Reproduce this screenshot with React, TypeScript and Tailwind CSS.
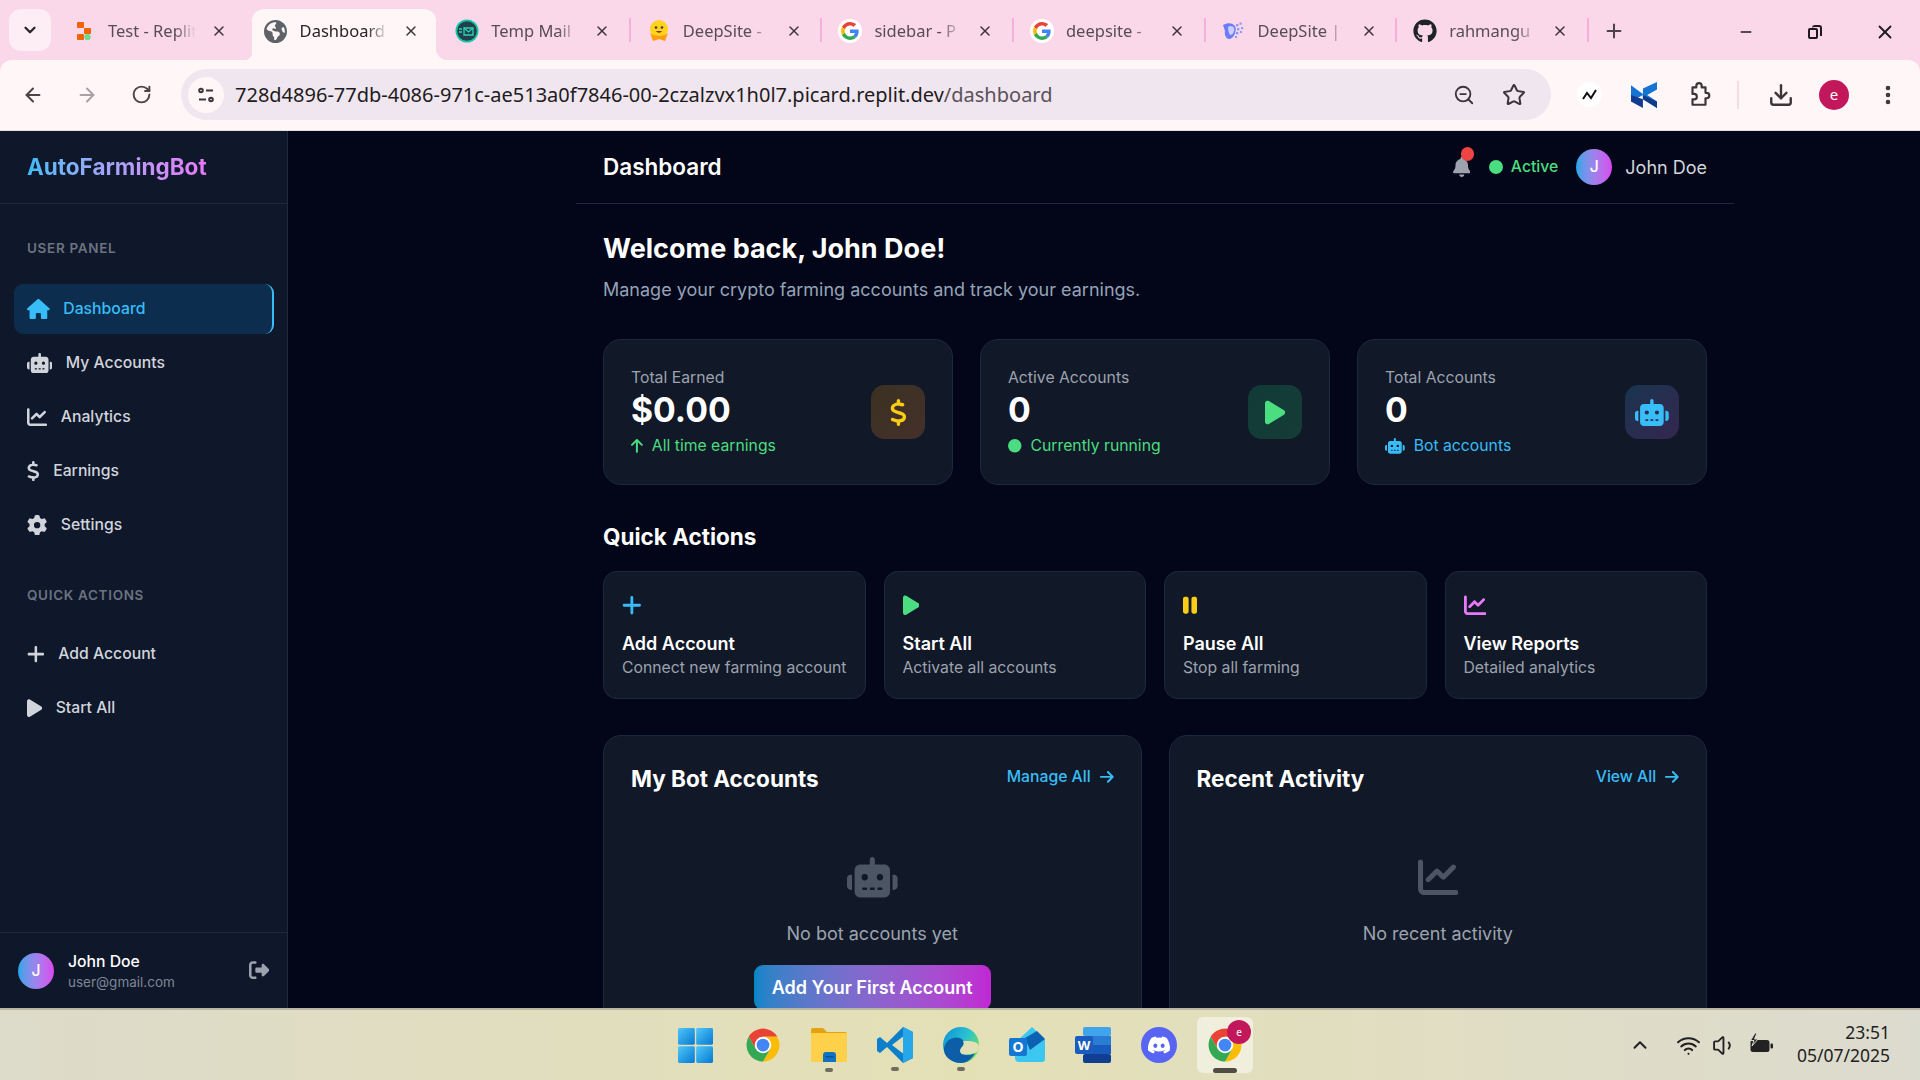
import type { ReactNode } from "react";
import {
  ArrowLeft,
  ArrowRight,
  ChevronDown,
  ChevronUp,
  Download,
  Minus,
  MoreVertical,
  Plus,
  RotateCw,
  Star,
  Volume1,
  Wifi,
  X,
  ZoomOut,
} from "lucide-react";
import { FaDiscord, FaGithub } from "react-icons/fa";
import {
  FaArrowRight,
  FaArrowUp,
  FaBell,
  FaChartLine,
  FaCircle,
  FaDollarSign,
  FaEarthAmericas,
  FaGear,
  FaHouse,
  FaPause,
  FaPlay,
  FaPlus,
  FaRightFromBracket,
  FaRobot,
} from "react-icons/fa6";

function GoogleIcon() {
  return (
    <span className="flex h-6 w-6 items-center justify-center rounded-full bg-white">
      <svg viewBox="0 0 48 48" className="h-[18px] w-[18px]">
        <path fill="#EA4335" d="M24 9.5c3.54 0 6.71 1.22 9.21 3.6l6.85-6.85C35.9 2.38 30.47 0 24 0 14.62 0 6.51 5.38 2.56 13.22l7.98 6.19C12.43 13.72 17.74 9.5 24 9.5z" />
        <path fill="#4285F4" d="M46.98 24.55c0-1.57-.15-3.09-.38-4.55H24v9.02h12.94c-.58 2.96-2.26 5.48-4.78 7.18l7.73 6c4.51-4.18 7.09-10.36 7.09-17.65z" />
        <path fill="#FBBC05" d="M10.53 28.59c-.48-1.45-.76-2.99-.76-4.59s.27-3.14.76-4.59l-7.98-6.19C.92 16.46 0 20.12 0 24c0 3.88.92 7.54 2.56 10.78l7.97-6.19z" />
        <path fill="#34A853" d="M24 48c6.48 0 11.93-2.13 15.89-5.81l-7.73-6c-2.15 1.45-4.92 2.3-8.16 2.3-6.26 0-11.57-4.22-13.47-9.91l-7.98 6.19C6.51 42.62 14.62 48 24 48z" />
      </svg>
    </span>
  );
}

function ReplitIcon() {
  return (
    <svg viewBox="0 0 24 24" className="h-6 w-6">
      <rect x="5" y="3" width="7" height="6" rx="1" fill="#f26207" />
      <rect x="12" y="9" width="7" height="6" rx="1" fill="#f26207" />
      <rect x="5" y="15" width="7" height="6" rx="1" fill="#f26207" />
      <circle cx="15.5" cy="18" r="3.2" fill="#6fdc8c" />
    </svg>
  );
}

function TempMailIcon() {
  return (
    <svg viewBox="0 0 24 24" className="h-6 w-6">
      <circle cx="12" cy="12" r="11.5" fill="#17c5a6" />
      <circle cx="12" cy="12" r="9.8" fill="#21404a" />
      <path d="M9 9h9v7H9z" fill="none" stroke="#2dd4b4" strokeWidth="1.3" />
      <path d="M9 9l4.5 4L18 9M4 10h3M4 13h3" fill="none" stroke="#2dd4b4" strokeWidth="1.3" />
    </svg>
  );
}

function HuggingIcon() {
  return (
    <svg viewBox="0 0 24 24" className="h-[26px] w-[26px]">
      <circle cx="12" cy="10" r="9" fill="#ffd21e" />
      <circle cx="9" cy="8.5" r="1.3" fill="#3a3b45" />
      <circle cx="15" cy="8.5" r="1.3" fill="#3a3b45" />
      <path d="M9 12c1.5 2.4 4.5 2.4 6 0z" fill="#7a3b2a" />
      <path d="M3 14l3 8 6-2 6 2 3-8-3 2-6 1-6-1z" fill="#ff9d0b" />
    </svg>
  );
}

function DeepSiteIcon() {
  return (
    <svg viewBox="0 0 24 24" className="h-[26px] w-[26px]">
      <path d="M1 6c5-3 10-2 12 1 2 4 0 11-5 13C4 21 2 15 3 12z" fill="#6d7cf6" />
      <path d="M6 8c3-2 5-1 6 1 1 3-1 6-3 7-2 0-3-5-3-8z" fill="#c9d0ff" />
      <g fill="#8f9bf8">
        <rect x="14" y="5" width="2.4" height="2.4" />
        <rect x="17.5" y="3.5" width="2.2" height="2.2" />
        <rect x="15" y="9" width="2.4" height="2.4" />
        <rect x="19" y="8" width="2.2" height="2.2" />
        <rect x="14" y="13" width="2.4" height="2.4" />
        <rect x="18" y="12" width="2" height="2" />
        <rect x="13" y="17" width="2" height="2" />
      </g>
    </svg>
  );
}

function ChromeLogo({ className }: { className: string }) {
  return (
    <svg viewBox="0 0 48 48" className={className}>
      <path fill="#ea4335" d="M5 13A22 22 0 0 1 43 13L24 13 14.5 29.5Z" />
      <path fill="#fbbc04" d="M43 13A22 22 0 0 1 24 46L33.5 29.5 24 13Z" />
      <path fill="#34a853" d="M24 46A22 22 0 0 1 5 13L14.5 29.5H33.5Z" />
      <circle cx="24" cy="24" r="11" fill="#fff" />
      <circle cx="24" cy="24" r="8.5" fill="#4285f4" />
    </svg>
  );
}

function WindowsLogo() {
  return (
    <svg viewBox="0 0 36 36" className="h-[35px] w-[35px]">
      <defs>
        <linearGradient id="win" x1="0" y1="0" x2="1" y2="1">
          <stop offset="0" stopColor="#4fc8f7" />
          <stop offset="1" stopColor="#0678d4" />
        </linearGradient>
      </defs>
      <rect x="0" y="0" width="17.3" height="17.3" rx="1.5" fill="url(#win)" />
      <rect x="18.7" y="0" width="17.3" height="17.3" rx="1.5" fill="url(#win)" />
      <rect x="0" y="18.7" width="17.3" height="17.3" rx="1.5" fill="url(#win)" />
      <rect x="18.7" y="18.7" width="17.3" height="17.3" rx="1.5" fill="url(#win)" />
    </svg>
  );
}

function FilesLogo() {
  return (
    <svg viewBox="0 0 36 34" className="h-[34px] w-9">
      <path d="M0 2a2 2 0 0 1 2-2h10l4 4h18a2 2 0 0 1 2 2v6H0z" fill="#e2a30f" />
      <rect x="0" y="5" width="36" height="29" rx="1" fill="#ffd04a" />
      <path d="M12 34V27a3 3 0 0 1 3-3h7a3 3 0 0 1 3 3v7z" fill="#0f72c4" />
      <rect x="14.5" y="28" width="8" height="1.4" fill="#0a4f8f" />
    </svg>
  );
}

function VsCodeLogo() {
  return (
    <svg viewBox="0 0 36 36" className="h-9 w-9">
      <path d="M26 0l10 5v26l-10 5L10 20 3 26l-3-2V12l3-2 7 6z" fill="#0b7fc9" />
      <path d="M26 0l10 5v26l-10 5z" fill="#25a7ea" />
      <path d="M26 9.5L15 18l11 8.500z" fill="#e3dfb9" />
    </svg>
  );
}

function EdgeLogo() {
  return (
    <svg viewBox="0 0 36 36" className="h-9 w-9">
      <defs>
        <linearGradient id="edgeTop" x1="0" y1="0" x2="1" y2="0.6">
          <stop offset="0" stopColor="#0c8fd8" />
          <stop offset="0.6" stopColor="#2bc3cf" />
          <stop offset="1" stopColor="#70dd5f" />
        </linearGradient>
      </defs>
      <circle cx="18" cy="18" r="18" fill="url(#edgeTop)" />
      <path d="M1 21C3 12 11 9 17 11c5 2 5 7 2 9-2 2-3 5 0 7 4 2 10 1 13-1-3 6-8 10-14 10C8 36 0 29 1 21z" fill="#0d5ea8" />
      <path d="M36 20c0 3-1 5-4 6-3 1-9 2-13 1-3-2-2-5 0-7 2-2 2-4 1-6 7 0 16 0 16 6z" fill="#e3dfb6" />
    </svg>
  );
}

function OutlookLogo() {
  return (
    <svg viewBox="0 0 36 36" className="h-9 w-9">
      <path d="M6 16L23 0l13 12v20a3 3 0 0 1-3 3H10a4 4 0 0 1-4-4z" fill="#3cc7f0" />
      <path d="M16 11L28 4l8 8-15 11z" fill="#0c61b3" />
      <rect x="0" y="11" width="18" height="18" rx="2" fill="#1478d2" />
      <text x="9" y="25" textAnchor="middle" fontSize="14" fontWeight="700" fill="#fff" fontFamily="Noto Sans, sans-serif">
        O
      </text>
    </svg>
  );
}

function WordLogo() {
  return (
    <svg viewBox="0 0 36 36" className="h-9 w-9">
      <rect x="8" y="0" width="28" height="9" rx="2" fill="#41a5ee" />
      <rect x="8" y="9" width="28" height="9" fill="#2b7cd3" />
      <rect x="8" y="18" width="28" height="9" fill="#185abd" />
      <rect x="8" y="27" width="28" height="9" rx="2" fill="#103f91" />
      <rect x="0" y="9" width="18" height="18" rx="2" fill="#1a5cbf" />
      <text x="9" y="23" textAnchor="middle" fontSize="13" fontWeight="700" fill="#fff" fontFamily="Noto Sans, sans-serif">
        W
      </text>
    </svg>
  );
}

function Avatar() {
  return (
    <div className="flex h-9 w-9 shrink-0 items-center justify-center rounded-full bg-linear-to-r from-[#0ea5e9] to-[#d946ef] text-[15.75px] font-medium text-white">
      J
    </div>
  );
}

const tabs: { title: string; icon: ReactNode; sep?: boolean; active?: boolean }[] = [
  { title: "Test - Replit", icon: <ReplitIcon /> },
  { title: "Dashboard", icon: <FaEarthAmericas className="h-[23px] w-[23px] text-[#5f6368]" />, active: true },
  { title: "Temp Mail", icon: <TempMailIcon />, sep: true },
  { title: "DeepSite - ", icon: <HuggingIcon />, sep: true },
  { title: "sidebar - P", icon: <GoogleIcon />, sep: true },
  { title: "deepsite - ", icon: <GoogleIcon />, sep: true },
  { title: "DeepSite | ", icon: <DeepSiteIcon />, sep: true },
  { title: "rahmangu", icon: <FaGithub className="h-6 w-6 text-[#1f2328]" />, sep: true },
];

function BrowserTab({ title, icon, sep, active }: { title: string; icon: ReactNode; sep?: boolean; active?: boolean }) {
  return (
    <div className="relative flex h-[51px] w-[191.600px] shrink-0 items-center pb-[7px] pl-3">
      {active && (
        <>
          <span className="absolute bottom-0 left-0 top-0 w-[184px] rounded-t-[12px] bg-[#fff7f7]" />
          <span className="absolute bottom-0 left-[-8px] h-2 w-2 bg-[radial-gradient(circle_at_0_0,transparent_8px,#fff7f7_8.500px)]" />
          <span className="absolute bottom-0 left-[184px] h-3 w-3 bg-[radial-gradient(circle_at_100%_0,transparent_12px,#fff7f7_12.500px)]" />
        </>
      )}
      <span className="relative flex h-6 w-6 shrink-0 items-center justify-center">{icon}</span>
      <span
        className={`relative ml-3 w-[88px] shrink-0 overflow-hidden whitespace-nowrap text-[16.500px] [mask-image:linear-gradient(to_right,black_76%,transparent)] ${
          active ? "text-[#2a2329]" : "text-[#574d55]"
        }`}
      >
        {title}
      </span>
      <X className="relative ml-[15px] h-4 w-4 shrink-0 text-[#3d343b]" strokeWidth={2.2} />
      {sep && <span className="absolute right-[4px] top-[9px] h-6 w-[2px] bg-[#f6aedb]" />}
    </div>
  );
}

function BrowserChrome() {
  return (
    <div className="h-[131px] shrink-0 bg-[#fad8ea] [font-family:'Noto_Sans',sans-serif]">
      <div className="flex h-[60px] items-start pl-[9px] pt-[9px]">
        <div className="mr-[9px] flex h-[42px] w-[42px] shrink-0 items-center justify-center rounded-[12px] bg-[#fdeef6]">
          <ChevronDown className="h-[18px] w-[18px] text-[#2a2329]" strokeWidth={3} />
        </div>
        {tabs.map((t) => (
          <BrowserTab key={t.title} title={t.title} icon={t.icon} sep={t.sep} active={t.active} />
        ))}
        <Plus className="ml-[10px] mt-[11px] h-[22px] w-[22px] shrink-0 text-[#4d4349]" strokeWidth={2.2} />
        <div className="ml-auto flex items-center pt-[12px] text-[#1f1a1e]">
          <Minus className="mr-[54px] h-4 w-4" strokeWidth={2.5} />
          <span className="relative mr-[52px] h-[14px] w-[14px]">
            <span className="absolute bottom-0 left-0 h-[11px] w-[10px] rounded-[2px] border-2 border-[#1f1a1e]" />
            <span className="absolute right-0 top-0 h-[11px] w-[10px] rounded-t-[3px] border-r-2 border-t-2 border-[#1f1a1e]" />
          </span>
          <X className="mr-[24px] h-[22px] w-[22px]" strokeWidth={2} />
        </div>
      </div>
      <div className="flex h-[71px] items-center rounded-t-[12px] border-b border-[#eadfe0] bg-[#fff7f7] pb-[1px]">
        <ArrowLeft className="ml-[22px] h-[22px] w-[22px] text-[#4d4349]" strokeWidth={2.2} />
        <ArrowRight className="ml-[32px] h-[22px] w-[22px] text-[#a9a1a6]" strokeWidth={2.2} />
        <RotateCw className="ml-[33px] h-[21px] w-[21px] text-[#4d4349]" strokeWidth={2.2} />
        <div className="ml-[29px] flex h-[51px] w-[1370px] shrink-0 items-center rounded-full bg-[#f0e6ef] pl-[7px]">
          <span className="flex h-[36px] w-[36px] shrink-0 items-center justify-center rounded-full bg-[#fff7f7]">
            <svg viewBox="0 0 20 20" className="h-5 w-5" fill="none" stroke="#3d343b" strokeWidth="2">
              <circle cx="5" cy="5.500" r="1.800" />
              <path d="M10 5.500h7M3 14.500h7" />
              <circle cx="15" cy="14.500" r="1.800" />
            </svg>
          </span>
          <span className="ml-[11px] whitespace-nowrap text-[20px] text-[#211b20]">
            728d4896-77db-4086-971c-ae513a0f7846-00-2czalzvx1h0l7.picard.replit.dev<span className="text-[#5b5159]">/dashboard</span>
          </span>
          <ZoomOut className="ml-auto mr-[1px] h-[22px] w-[22px] text-[#3d343b]" strokeWidth={2} />
          <Star className="ml-[26px] mr-[25px] h-[24px] w-[24px] text-[#3d343b]" strokeWidth={2} />
        </div>
        <span className="ml-[26px] flex h-[25px] w-[25px] shrink-0 items-center justify-center rounded-full bg-white">
          <svg viewBox="0 0 20 20" className="h-5 w-5" fill="none" stroke="#111" strokeWidth="2">
            <path d="M3 14l4-6 4 5 5-8" />
          </svg>
        </span>
        <svg viewBox="0 0 24 24" className="ml-[29px] h-[26px] w-[26px] shrink-0">
          <path d="M0 3l11 8V6L24 0v7l-9 5 9 6v6L11 16v-4L0 18z" fill="#1573d1" />
          <path d="M0 12l11 4v8L0 18zM11 12l13 6v6L11 16z" fill="#123b8f" />
        </svg>
        <svg viewBox="0 0 24 24" className="ml-[29px] h-[26px] w-[26px] shrink-0" fill="none" stroke="#3d343b" strokeWidth="2" strokeLinejoin="round">
          <path d="M6 5h3.500V3.500a2.500 2.500 0 0 1 5 0V5H18v5h1a2.500 2.500 0 0 1 0 5h-1v6H6v-5h1.500a2.500 2.500 0 0 0 0-5H6z" />
        </svg>
        <span className="ml-[25px] h-[28px] w-[2px] shrink-0 bg-[#f6dbe6]" />
        <Download className="ml-[29px] h-[26px] w-[26px] shrink-0 text-[#3d343b]" strokeWidth={2.2} />
        <span className="ml-[25px] flex h-[30px] w-[30px] shrink-0 items-center justify-center rounded-full bg-[#c2185b] text-[15px] text-white">
          e
        </span>
        <MoreVertical className="ml-[27px] h-[24px] w-[24px] shrink-0 text-[#3d343b]" strokeWidth={2.6} />
      </div>
    </div>
  );
}

const navItems = [
  { label: "Dashboard", icon: <FaHouse className="w-[1.125em]" />, active: true },
  { label: "My Accounts", icon: <FaRobot className="w-[1.25em]" /> },
  { label: "Analytics", icon: <FaChartLine /> },
  { label: "Earnings", icon: <FaDollarSign className="w-[0.625em]" /> },
  { label: "Settings", icon: <FaGear /> },
];

const sideActions = [
  { label: "Add Account", icon: <FaPlus className="w-[0.875em]" /> },
  { label: "Start All", icon: <FaPlay className="w-[0.75em]" /> },
];

function NavItem({ label, icon, active }: { label: string; icon: ReactNode; active?: boolean }) {
  return (
    <div
      className={`flex h-[49.500px] items-center rounded-[9px] px-[13.500px] text-[15.750px] font-medium ${
        active ? "border-r-2 border-[#38bdf8] bg-[#0c2d4d] text-[#38bdf8]" : "text-[#d1d5db]"
      }`}
    >
      <span className="mr-[13.500px] text-[20.250px]">{icon}</span>
      {label}
    </div>
  );
}

function Sidebar() {
  return (
    <aside className="flex w-[288px] shrink-0 flex-col border-r border-[#1e293b] bg-[#0f172a]">
      <div className="flex h-[73px] shrink-0 items-center border-b border-[#1e293b] px-[27px]">
        <span className="bg-linear-to-r from-[#38bdf8] to-[#e879f9] bg-clip-text text-[22.500px] font-bold text-transparent">
          AutoFarmingBot
        </span>
      </div>
      <nav className="flex-1 px-[13.500px] pt-[35px]">
        <p className="mb-[27px] px-[13.500px] text-[13.500px] font-semibold uppercase leading-[18px] tracking-[0.68px] text-[#6b7280]">
          User Panel
        </p>
        <div className="flex flex-col gap-[4.500px]">
          {navItems.map((item) => (
            <NavItem key={item.label} label={item.label} icon={item.icon} active={item.active} />
          ))}
        </div>
        <p className="mb-[26px] mt-[36px] px-[13.500px] text-[13.500px] font-semibold uppercase leading-[18px] tracking-[0.68px] text-[#6b7280]">
          Quick Actions
        </p>
        <div className="flex flex-col gap-[4.500px]">
          {sideActions.map((item) => (
            <NavItem key={item.label} label={item.label} icon={item.icon} />
          ))}
        </div>
      </nav>
      <div className="flex h-[76px] shrink-0 items-center border-t border-[#1e293b] pl-[18px] pr-[18px]">
        <Avatar />
        <div className="ml-[14px] flex-1 pt-[1px]">
          <p className="text-[15.750px] font-medium leading-[22px] text-white">John Doe</p>
          <p className="text-[13.500px] leading-[19px] text-[#7c8798]">user@gmail.com</p>
        </div>
        <FaRightFromBracket className="text-[20.250px] text-[#9ca3af]" />
      </div>
    </aside>
  );
}

function StatCard({
  label,
  value,
  sub,
  subClass,
  subIcon,
  icon,
  iconClass,
}: {
  label: string;
  value: string;
  sub: string;
  subClass: string;
  subIcon: ReactNode;
  icon: ReactNode;
  iconClass: string;
}) {
  return (
    <div className="flex items-center justify-between rounded-[18px] border border-[#1e293b] bg-[#111827] p-[27px]">
      <div>
        <p className="text-[15.750px] leading-[22.500px] text-[#9ca3af]">{label}</p>
        <p className="text-[33.750px] font-bold leading-[40.500px] text-white">{value}</p>
        <p className={`mt-[4.500px] flex items-center gap-[9px] text-[15.750px] leading-[22.500px] ${subClass}`}>
          {subIcon}
          {sub}
        </p>
      </div>
      <div className={`flex h-[54px] w-[54px] items-center justify-center rounded-[13.500px] text-[27px] ${iconClass}`}>{icon}</div>
    </div>
  );
}

function ActionCard({ icon, title, sub }: { icon: ReactNode; title: string; sub: string }) {
  return (
    <div className="rounded-[13.500px] border border-[#1e293b] bg-[#111827] p-[18px]">
      <div className="flex h-[31.500px] items-center text-[22.500px]">{icon}</div>
      <p className="mt-[9px] text-[18px] font-semibold leading-[27px] text-white">{title}</p>
      <p className="text-[15.750px] leading-[22.500px] text-[#9ca3af]">{sub}</p>
    </div>
  );
}

function Panel({ title, link, children }: { title: string; link: string; children: ReactNode }) {
  return (
    <div className="rounded-[18px] border border-[#1e293b] bg-[#111827] p-[27px]">
      <div className="mb-[27px] flex items-center justify-between">
        <h2 className="text-[22.500px] font-bold leading-[31.500px] text-white">{title}</h2>
        <span className="mb-[2px] flex items-center gap-[9px] text-[15.750px] font-medium text-[#38bdf8]">
          {link}
          <FaArrowRight className="w-[0.875em]" />
        </span>
      </div>
      <div className="flex flex-col items-center pt-[36px] text-center">{children}</div>
    </div>
  );
}

function MainContent() {
  return (
    <main className="flex-1 overflow-hidden bg-[#020618] pl-[288px] pr-[186px]">
      <header className="flex h-[73px] items-center justify-between border-b border-[#1e293b] px-[27px]">
        <h1 className="text-[22.500px] font-semibold text-white">Dashboard</h1>
        <div className="flex items-center">
          <span className="relative text-[18px] text-[#9ca3af]">
            <FaBell className="h-[20px] w-[17.500px]" />
            <span className="absolute right-[-4px] top-[-10px] h-[13.500px] w-[13.500px] rounded-full bg-[#ef4444]" />
          </span>
          <span className="ml-[19px] h-[13.500px] w-[13.500px] rounded-full bg-[#4ade80]" />
          <span className="ml-[8px] text-[15.750px] font-medium text-[#4ade80]">Active</span>
          <span className="ml-[18px]">
            <Avatar />
          </span>
          <span className="ml-[13px] text-[18px] text-[#d1d5db]">John Doe</span>
        </div>
      </header>
      <div className="p-[27px]">
        <h2 className="text-[27px] font-bold leading-[36px] text-white">Welcome back, John Doe!</h2>
        <p className="mb-[36px] mt-[9px] text-[18px] leading-[27px] text-[#94a3b8]">Manage your crypto farming accounts and track your earnings.</p>
        <div className="mb-[36px] grid grid-cols-3 gap-[27px]">
          <StatCard
            label="Total Earned"
            value="$0.00"
            sub="All time earnings"
            subClass="text-[#4ade80]"
            subIcon={<FaArrowUp className="w-[0.75em]" />}
            icon={<FaDollarSign className="w-[0.625em]" />}
            iconClass="bg-linear-to-br from-[#3a3122] to-[#45302a] text-[#facc15]"
          />
          <StatCard
            label="Active Accounts"
            value="0"
            sub="Currently running"
            subClass="text-[#4ade80]"
            subIcon={<FaCircle className="text-[13.500px]" />}
            icon={<FaPlay className="w-[0.75em]" />}
            iconClass="bg-linear-to-br from-[#113a38] to-[#153c36] text-[#4ade80]"
          />
          <StatCard
            label="Total Accounts"
            value="0"
            sub="Bot accounts"
            subClass="text-[#38bdf8]"
            subIcon={<FaRobot className="w-[1.25em]" />}
            icon={<FaRobot className="w-[1.25em]" />}
            iconClass="bg-linear-to-br from-[#16344f] to-[#33264f] text-[#38bdf8]"
          />
        </div>
        <h2 className="mb-[18px] text-[22.500px] font-bold leading-[31.500px] text-white">Quick Actions</h2>
        <div className="mb-[36px] grid grid-cols-4 gap-[18px]">
          <ActionCard icon={<FaPlus className="w-[0.875em] text-[#38bdf8]" />} title="Add Account" sub="Connect new farming account" />
          <ActionCard icon={<FaPlay className="w-[0.75em] text-[#4ade80]" />} title="Start All" sub="Activate all accounts" />
          <ActionCard icon={<FaPause className="w-[0.625em] text-[#facc15]" />} title="Pause All" sub="Stop all farming" />
          <ActionCard icon={<FaChartLine className="text-[#e879f9]" />} title="View Reports" sub="Detailed analytics" />
        </div>
        <div className="grid grid-cols-2 gap-[27px]">
          <Panel title="My Bot Accounts" link="Manage All">
            <FaRobot className="w-[1.25em] text-[40.500px] text-[#4b5563]" />
            <p className="mt-[22px] text-[18px] leading-[27px] text-[#9ca3af]">No bot accounts yet</p>
            <button
              type="button"
              className="mt-[18px] rounded-[9px] bg-linear-to-r from-[#0284c7] to-[#c026d3] px-[18px] py-[9px] text-[18px] font-semibold leading-[27px] text-white"
            >
              Add Your First Account
            </button>
          </Panel>
          <Panel title="Recent Activity" link="View All">
            <FaChartLine className="text-[40.500px] text-[#4b5563]" />
            <p className="mt-[22px] text-[18px] leading-[27px] text-[#9ca3af]">No recent activity</p>
          </Panel>
        </div>
      </div>
    </main>
  );
}

function Taskbar() {
  return (
    <div className="relative flex h-[72px] shrink-0 items-center border-t-2 border-[#b9b7a3] bg-linear-to-r from-[#dddbca] via-[#e4e0b6] to-[#dcdbcf] [font-family:'Noto_Sans',sans-serif]">
      <div className="ml-[678px] flex w-[575px] items-center">
        <WindowsLogo />
        <span className="ml-[32px]">
          <ChromeLogo className="h-9 w-9" />
        </span>
        <span className="relative ml-[30px]">
          <FilesLogo />
          <span className="absolute bottom-[-10px] left-[14px] h-1 w-2 rounded-full bg-[#6f6d5e]" />
        </span>
        <span className="relative ml-[30px]">
          <VsCodeLogo />
          <span className="absolute bottom-[-8px] left-[14px] h-1 w-2 rounded-full bg-[#6f6d5e]" />
        </span>
        <span className="relative ml-[30px]">
          <EdgeLogo />
          <span className="absolute bottom-[-8px] left-[14px] h-1 w-2 rounded-full bg-[#6f6d5e]" />
        </span>
        <span className="ml-[30px]">
          <OutlookLogo />
        </span>
        <span className="ml-[30px]">
          <WordLogo />
        </span>
        <span className="ml-[30px] flex h-9 w-9 items-center justify-center rounded-full bg-[#5865f2]">
          <FaDiscord className="h-[24px] w-[24px] text-white" />
        </span>
        <span className="relative ml-[20px] flex h-[56px] w-[56px] shrink-0 items-center justify-center rounded-[6px] bg-[#f0eedd]">
          <ChromeLogo className="h-9 w-9" />
          <span className="absolute right-[2px] top-[3px] flex h-[24px] w-[24px] items-center justify-center rounded-full bg-[#c2185b] text-[10px] text-white">
            e
          </span>
          <span className="absolute bottom-0 left-[16px] h-[5px] w-[24px] rounded-full bg-[#4f4e45]" />
        </span>
      </div>
      <ChevronUp className="ml-[376px] h-[22px] w-[22px] text-[#222]" strokeWidth={2.2} />
      <Wifi className="ml-[25px] h-[25px] w-[25px] text-[#222]" strokeWidth={2} />
      <Volume1 className="ml-[11px] h-[25px] w-[25px] text-[#222]" strokeWidth={1.8} />
      <svg viewBox="0 0 26 26" className="ml-[11px] h-[26px] w-[26px]">
        <rect x="2.500" y="8" width="19" height="12" rx="2.500" fill="#222" />
        <rect x="22.500" y="11.500" width="2.500" height="5" rx="1" fill="#222" />
        <path d="M7 1L2.500 8.500h3.500L4 14l6-7H6.500L9 1z" fill="#222" stroke="#dcdbcf" strokeWidth="1" />
      </svg>
      <div className="ml-auto mb-[2px] mr-[30px] text-right text-[17.500px] leading-[23px] text-[#222]">
        <p>23:51</p>
        <p>05/07/2025</p>
      </div>
    </div>
  );
}

export default function App() {
  return (
    <div className="flex h-screen w-screen flex-col overflow-hidden [font-family:Inter,sans-serif]">
      <BrowserChrome />
      <div className="flex min-h-0 flex-1 overflow-hidden">
        <Sidebar />
        <MainContent />
      </div>
      <Taskbar />
    </div>
  );
}
